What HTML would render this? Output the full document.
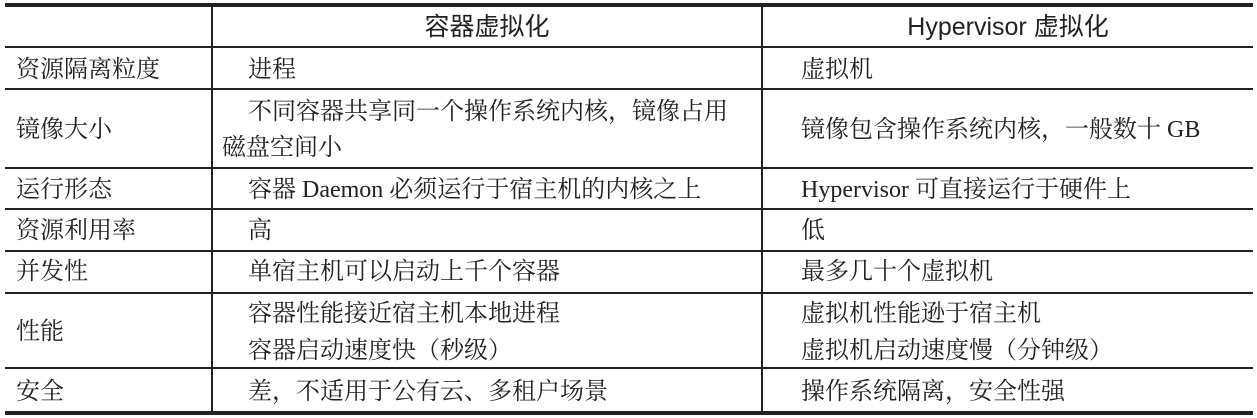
<!DOCTYPE html><html><head><meta charset="utf-8"><style>
body{margin:0;width:1257px;height:418px;background:#fff;position:relative;overflow:hidden;font-family:"Liberation Serif","Noto Serif CJK SC",serif;font-size:24px;color:#222}
.h{position:absolute;left:5px;width:1248px;background:#222}
.v{position:absolute;width:2px;background:#222;top:7px;height:405px}
.t{position:absolute;white-space:nowrap;line-height:36px}
.s{font-family:"Liberation Sans","Noto Sans CJK SC",sans-serif;font-size:25px}
</style></head><body>
<div class="h" style="top:3px;height:4px"></div>
<div class="h" style="top:46px;height:2px"></div>
<div class="h" style="top:88px;height:2px"></div>
<div class="h" style="top:167px;height:2px"></div>
<div class="h" style="top:208px;height:2px"></div>
<div class="h" style="top:250px;height:2px"></div>
<div class="h" style="top:292px;height:2px"></div>
<div class="h" style="top:367px;height:2px"></div>
<div class="h" style="top:411px;height:4px"></div>
<div class="v" style="left:211px"></div>
<div class="v" style="left:761px"></div>
<div class="t s" style="left:213px;width:548px;text-align:center;top:9px">容器虚拟化</div>
<div class="t s" style="left:763px;width:490px;text-align:center;top:9px">Hypervisor 虚拟化</div>
<div class="t" style="left:16px;top:52px">资源隔离粒度</div>
<div class="t" style="left:248px;top:52px">进程</div>
<div class="t" style="left:801px;top:52px">虚拟机</div>
<div class="t" style="left:16px;top:112px">镜像大小</div>
<div class="t" style="left:248px;top:94px">不同容器共享同一个操作系统内核，镜像占用</div>
<div class="t" style="left:222px;top:130px">磁盘空间小</div>
<div class="t" style="left:801px;top:112px">镜像包含操作系统内核，一般数十 GB</div>
<div class="t" style="left:16px;top:172px">运行形态</div>
<div class="t" style="left:248px;top:172px">容器 Daemon 必须运行于宿主机的内核之上</div>
<div class="t" style="left:801px;top:172px">Hypervisor 可直接运行于硬件上</div>
<div class="t" style="left:16px;top:213px">资源利用率</div>
<div class="t" style="left:248px;top:213px">高</div>
<div class="t" style="left:801px;top:213px">低</div>
<div class="t" style="left:16px;top:254px">并发性</div>
<div class="t" style="left:248px;top:254px">单宿主机可以启动上千个容器</div>
<div class="t" style="left:801px;top:254px">最多几十个虚拟机</div>
<div class="t" style="left:16px;top:314px">性能</div>
<div class="t" style="left:248px;top:296px">容器性能接近宿主机本地进程</div>
<div class="t" style="left:248px;top:333px">容器启动速度快（秒级）</div>
<div class="t" style="left:801px;top:296px">虚拟机性能逊于宿主机</div>
<div class="t" style="left:801px;top:333px">虚拟机启动速度慢（分钟级）</div>
<div class="t" style="left:16px;top:374px">安全</div>
<div class="t" style="left:248px;top:374px">差，不适用于公有云、多租户场景</div>
<div class="t" style="left:801px;top:374px">操作系统隔离，安全性强</div>
</body></html>
